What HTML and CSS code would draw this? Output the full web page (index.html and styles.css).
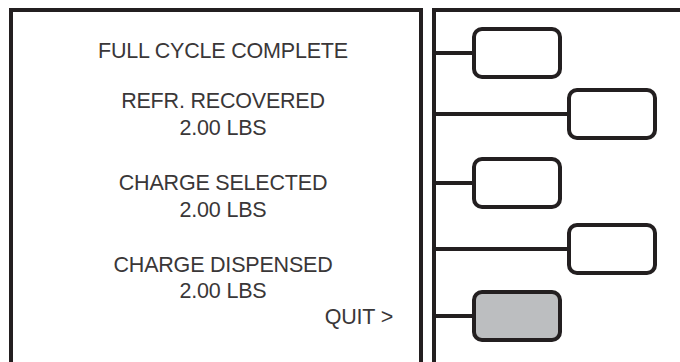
FILE: index.html
```html
<!DOCTYPE html>
<html lang="en">
<head>
  <meta charset="UTF-8" />
  <meta name="viewport" content="width=device-width, initial-scale=1" />
  <title>Full Cycle Complete</title>
  <link rel="stylesheet" href="styles.css">
</head>
<body>
  <div class="screen">
    <div class="display">
      <p class="title">FULL CYCLE COMPLETE</p>

      <div class="reading">
        <p>REFR. RECOVERED</p>
        <p>2.00 LBS</p>
      </div>

      <div class="reading">
        <p>CHARGE SELECTED</p>
        <p>2.00 LBS</p>
      </div>

      <div class="reading">
        <p>CHARGE DISPENSED</p>
        <p>2.00 LBS</p>
      </div>

      <p class="quit">QUIT &gt;</p>
    </div>

    <div class="keys">
      <div class="key-row row-1"><span class="wire short"></span><span class="key"></span></div>
      <div class="key-row row-2"><span class="wire long"></span><span class="key"></span></div>
      <div class="key-row row-3"><span class="wire short"></span><span class="key"></span></div>
      <div class="key-row row-4"><span class="wire long"></span><span class="key"></span></div>
      <div class="key-row row-5"><span class="wire short"></span><span class="key active"></span></div>
    </div>
  </div>
</body>
</html>
```

FILE: styles.css
```css
body {
  margin: 0;
  background: #fff;
  font-family: "Liberation Sans", Arial, sans-serif;
  color: #3a3738;
  overflow: hidden;
}
p {
  margin: 0;
}
.screen {
  display: flex;
  gap: 9px;
  padding: 8px 0 0 9px;
  height: 100vh;
  box-sizing: border-box;
}
.display {
  width: 414px;
  border: 4px solid #231f20;
  border-bottom: none;
  padding: 26px 0 0 14px;
  box-sizing: border-box;
  text-align: center;
  font-size: 21.5px;
  line-height: 27px;
  letter-spacing: -0.2px;
}
.title {
  margin-bottom: 23px;
}
.reading {
  margin-bottom: 28px;
}
.reading:last-of-type {
  margin-bottom: 0;
  line-height: 26px;
}
.quit {
  text-align: right;
  padding-right: 26px;
  line-height: 26px;
}
.keys {
  flex: 1;
  border-left: 4px solid #231f20;
  border-top: 4px solid #231f20;
  display: flex;
  flex-direction: column;
}
.key-row {
  display: flex;
  align-items: center;
}
.row-1 { margin-top: 15px; }
.row-2 { margin-top: 9px; }
.row-3 { margin-top: 17px; }
.row-4 { margin-top: 14px; }
.row-5 { margin-top: 15px; }
.wire {
  height: 4px;
  background: #231f20;
}
.wire.short {
  width: 36px;
}
.wire.long {
  width: 131px;
}
.key {
  width: 90px;
  height: 52px;
  border: 4.5px solid #231f20;
  border-radius: 10px;
  box-sizing: border-box;
  background: #fff;
}
.key.active {
  background: #bcbec0;
}
```
